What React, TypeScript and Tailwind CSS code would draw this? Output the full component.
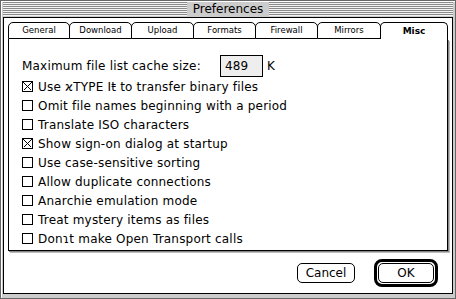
import React, { useState } from 'react';

const tabs = [
  { label: 'General', w: 'w-[62px]' },
  { label: 'Download', w: 'w-[63px]' },
  { label: 'Upload', w: 'w-[63px]' },
  { label: 'Formats', w: 'w-[63px]' },
  { label: 'Firewall', w: 'w-[63px]' },
  { label: 'Mirrors', w: 'w-[64px]' },
  { label: 'Misc', w: 'w-[68px]' },
];

const options = [
  { label: 'Use ϰTYPE Iŧ to transfer binary files', checked: true },
  { label: 'Omit file names beginning with a period', checked: false },
  { label: 'Translate ISO characters', checked: false },
  { label: 'Show sign-on dialog at startup', checked: true },
  { label: 'Use case-sensitive sorting', checked: false },
  { label: 'Allow duplicate connections', checked: false },
  { label: 'Anarchie emulation mode', checked: false },
  { label: 'Treat mystery items as files', checked: false },
  { label: 'Donɿt make Open Transport calls', checked: false },
];

const CheckBox: React.FC<{ checked: boolean; onClick: () => void }> = ({ checked, onClick }) => (
  <div onClick={onClick} className="w-[11px] h-[11px] border border-black bg-white shrink-0">
    {checked && (
      <svg width="9" height="9" viewBox="0 0 9 9" className="block">
        <path d="M0.5 0.5 L8.5 8.5 M8.5 0.5 L0.5 8.5" stroke="black" strokeWidth="1" shapeRendering="crispEdges" />
      </svg>
    )}
  </div>
);

export default function App() {
  const [active, setActive] = useState('Misc');
  const [checks, setChecks] = useState(options.map((o) => o.checked));
  const [cacheSize, setCacheSize] = useState('489');

  return (
    <div
      className="w-[456px] h-[299px] border border-[#666] bg-[#cccccc] shadow-[inset_1px_1px_0_#ffffff] flex flex-col text-black"
      style={{ fontFamily: '"DejaVu Sans", Verdana, sans-serif' }}
    >
      {/* Title bar */}
      <div className="h-[16px] px-[2px] py-[1px] flex items-center">
        <div className="flex-1 h-full bg-[repeating-linear-gradient(to_bottom,#8a8a8a_0px,#8a8a8a_1px,#f4f4f4_1px,#f4f4f4_2px)]" />
        <div className="px-[6px] text-[12px] leading-[14px] bg-[#cccccc]">Preferences</div>
        <div className="flex-1 h-full bg-[repeating-linear-gradient(to_bottom,#8a8a8a_0px,#8a8a8a_1px,#f4f4f4_1px,#f4f4f4_2px)]" />
      </div>

      {/* Window body */}
      <div className="flex-1 px-[2px] pb-[4px] flex">
        <div className="flex-1 border border-black bg-white flex flex-col px-[4px] pt-[4px] pb-[6px]">
          {/* Tabs */}
          <div className="flex h-[17px]">
            {tabs.map((t, i) => {
              const selected = t.label === active;
              return (
                <button
                  key={t.label}
                  onClick={() => setActive(t.label)}
                  className={`${t.w} ${i > 0 ? '-ml-px' : ''} h-[17px] border-x border-t border-black rounded-t-[5px] bg-white flex items-center justify-center text-[8.5px] leading-none ${
                    selected ? 'font-bold text-[9px] relative z-10' : 'border-b'
                  }`}
                >
                  {t.label}
                </button>
              );
            })}
          </div>

          {/* Panel */}
          <div className="h-[212px] border-x border-b border-black shadow-[1px_1px_0_0_#888,2px_2px_0_0_#bbb] pl-[13px] pt-[16px] text-[12px] tracking-[0.2px]">
            <div className="h-[22px] flex items-center">
              <span>Maximum file list cache size:</span>
              <input
                value={cacheSize}
                onChange={(e) => setCacheSize(e.target.value)}
                className="ml-[19px] w-[43px] h-[22px] border border-black bg-[#eeeeee] px-[4px] outline-none"
              />
              <span className="ml-[4px]">K</span>
            </div>
            {options.map((o, i) => (
              <div key={o.label} className="h-[19px] flex items-center gap-[5px]">
                <CheckBox
                  checked={checks[i]}
                  onClick={() => setChecks(checks.map((c, j) => (j === i ? !c : c)))}
                />
                <span>{o.label}</span>
              </div>
            ))}
          </div>

          {/* Buttons */}
          <div className="mt-auto flex items-center justify-end gap-[19px] pr-[10px] text-[12px]">
            <button className="w-[58px] h-[20px] border border-black rounded-[5px] bg-white leading-none">
              Cancel
            </button>
            <div className="border-[3px] border-black rounded-[8px] p-[1px]">
              <button className="w-[56px] h-[20px] border border-black rounded-[5px] bg-white leading-none">
                OK
              </button>
            </div>
          </div>
        </div>
      </div>
    </div>
  );
}
